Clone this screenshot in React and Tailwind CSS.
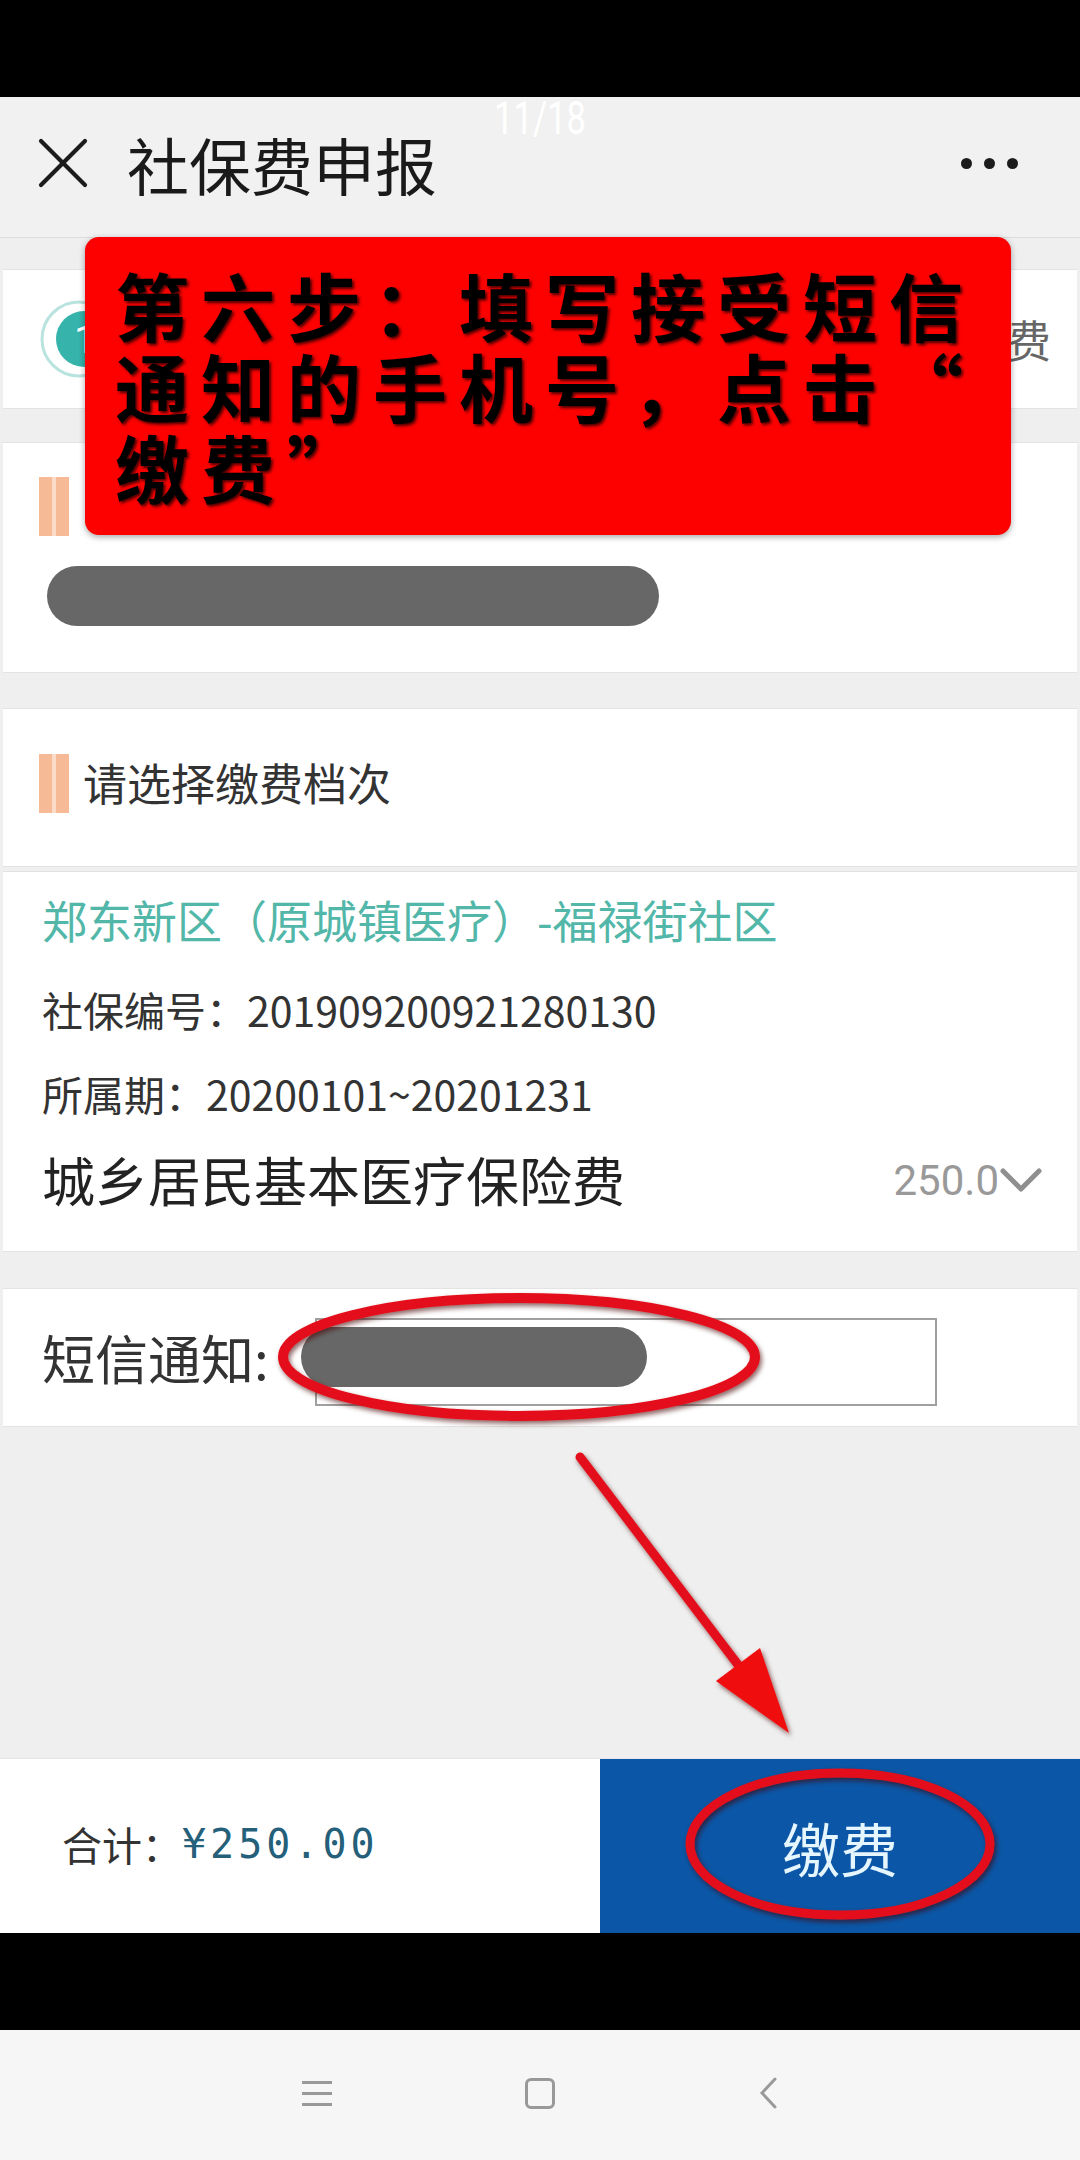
import { X } from 'lucide-react';

const cjk = { fontFamily: '"Noto Sans CJK SC", "Noto Sans", sans-serif' };

function OrangeBar({ className = '' }) {
  return (
    <div className={`flex h-[59px] w-[30px] shrink-0 ${className}`}>
      <div className="w-[13px] bg-[#f6bb96]" />
      <div className="w-[4px] bg-[#fbdcc8]" />
      <div className="w-[13px] bg-[#f6bb96]" />
    </div>
  );
}

function Card({ className = '', children }) {
  return (
    <div className={`mx-[3px] bg-white border-y border-[#e3e3e3] ${className}`}>{children}</div>
  );
}

export default function App() {
  return (
    <div className="relative w-[1080px] h-[2160px] overflow-hidden flex flex-col bg-[#efefef]" style={cjk}>
      {/* status bar */}
      <div className="h-[97px] bg-black shrink-0" />

      {/* header */}
      <div className="relative h-[141px] shrink-0 bg-[#f1f1f1] border-b border-[#dcdcdc] flex items-center pl-[19px] pr-[62px]">
        <span className="absolute left-1/2 top-[-2px] -translate-x-1/2 scale-x-75 text-[46px] leading-[46px] text-white" style={{ fontFamily: 'Roboto, sans-serif' }}>
          11/18
        </span>
        <X className="w-[88px] h-[88px] text-[#1c1c1c] mt-[-8px]" strokeWidth={1.15} />
        <h1 className="ml-[20px] text-[62px] leading-none text-[#1a1a1a] mt-[-6px]">社保费申报</h1>
        <div className="ml-auto flex gap-[12px] mt-[-8px]">
          <span className="w-[11px] h-[11px] rounded-full bg-[#1c1c1c]" />
          <span className="w-[11px] h-[11px] rounded-full bg-[#1c1c1c]" />
          <span className="w-[11px] h-[11px] rounded-full bg-[#1c1c1c]" />
        </div>
      </div>

      {/* content */}
      <div className="flex-1 flex flex-col pt-[31px]">
        {/* step indicator */}
        <Card className="h-[140px] flex items-center pl-[36px] pr-[26px]">
          <svg width="80" height="80" viewBox="0 0 80 80">
            <circle cx="40" cy="40" r="37" fill="none" stroke="#b9e3df" strokeWidth="3" />
            <circle cx="45" cy="40" r="28" fill="#36b3aa" />
            <text x="46" y="54" fontSize="38" fill="#fff" textAnchor="middle" fontFamily="Roboto, sans-serif">1</text>
          </svg>
          <span className="ml-auto text-[44px] text-[#666]">费</span>
        </Card>

        {/* payer */}
        <Card className="h-[231px] mt-[33px] pt-[34px] pl-[36px]">
          <OrangeBar />
          <div className="mt-[30px] ml-[8px] w-[612px] h-[60px] rounded-full bg-[#676767]" />
        </Card>

        {/* level header */}
        <Card className="h-[159px] mt-[35px] flex items-center pl-[36px]">
          <OrangeBar className="mt-[-8px]" />
          <span className="ml-[14px] text-[44px] leading-none text-[#333] mt-[-12px]">请选择缴费档次</span>
        </Card>

        {/* detail */}
        <Card className="h-[381px] mt-[4px] px-[39px] flex flex-col">
          <div className="h-[96px] flex items-center text-[45px] text-[#52b7a9] whitespace-nowrap">
            郑东新区（原城镇医疗）-福禄街社区
          </div>
          <div className="h-[84px] flex items-center text-[41px] text-[#333]">社保编号：201909200921280130</div>
          <div className="h-[84px] flex items-center text-[41px] text-[#333]">所属期：20200101~20201231</div>
          <div className="h-[88px] flex items-center">
            <span className="text-[53px] text-[#222]">城乡居民基本医疗保险费</span>
            <span className="ml-auto text-[42px] text-[#999]" style={{ fontFamily: 'Roboto, sans-serif' }}>250.0</span>
            <svg width="44" height="30" viewBox="0 0 44 30" className="mr-[-5px]">
              <path d="M4 6 L22 24 L40 6" fill="none" stroke="#8f8f8f" strokeWidth="5" strokeLinecap="round" strokeLinejoin="round" />
            </svg>
          </div>
        </Card>

        {/* sms */}
        <Card className="h-[139px] mt-[36px] flex items-center pl-[39px]">
          <span className="text-[53px] text-[#333]">短信通知:</span>
          <div className="relative ml-[46px] w-[622px] h-[88px] border-2 border-[#a0a0a0] mt-[8px]">
            <div className="absolute left-[-16px] top-[7px] w-[346px] h-[60px] rounded-[30px] bg-[#676767]" />
          </div>
        </Card>
      </div>

      {/* bottom bar */}
      <div className="h-[175px] shrink-0 flex border-t border-[#e6e6e6]">
        <div className="w-[600px] bg-white flex items-center pl-[62px] pb-[4px]">
          <span className="text-[40px] text-[#333]">合计：</span>
          <span className="text-[40px] tracking-[4px] text-[#24607a]" style={{ fontFamily: '"DejaVu Sans Mono", monospace' }}>¥250.00</span>
        </div>
        <div className="flex-1 bg-[#0b56a6] flex items-center justify-center">
          <span className="text-[58px] text-[#e6f6ff] mt-[2px]">缴费</span>
        </div>
      </div>

      <div className="h-[97px] shrink-0 bg-black" />

      {/* nav bar */}
      <div className="h-[130px] shrink-0 bg-[#f6f6f6] flex items-center pl-[302px] pb-[4px]">
        <div className="flex flex-col gap-[8px] w-[30px]">
          <span className="h-[3px] bg-[#999]" />
          <span className="h-[3px] bg-[#999]" />
          <span className="h-[3px] bg-[#999]" />
        </div>
        <div className="ml-[193px] w-[30px] h-[31px] rounded-[6px] border-[3px] border-[#999]" />
        <svg width="20" height="32" viewBox="0 0 20 32" className="ml-[203px]">
          <path d="M17 2 L4 16 L17 30" fill="none" stroke="#999" strokeWidth="3" strokeLinecap="round" />
        </svg>
      </div>

      {/* tutorial callout */}
      <div className="absolute left-[85px] top-[237px] w-[926px] h-[298px] rounded-[14px] bg-[#fd0000] shadow-[0_2px_6px_rgba(0,0,0,0.35)] pl-[30px] pt-[26px]">
        <p className="text-[74px] leading-[81px] font-bold tracking-[12px] text-black whitespace-nowrap [text-shadow:2px_2px_3px_#4a0000]">
          第六步：填写接受短信
          <br />
          通知的手机号，点击“
          <br />
          缴费”
        </p>
      </div>

      {/* annotations */}
      <svg className="absolute inset-0 pointer-events-none" width="1080" height="2160" viewBox="0 0 1080 2160">
        <defs>
          <filter id="sh" x="-20%" y="-20%" width="140%" height="140%">
            <feDropShadow dx="2" dy="3" stdDeviation="2.5" floodColor="#400" floodOpacity="0.6" />
          </filter>
        </defs>
        <ellipse cx="519" cy="1357" rx="236" ry="59" fill="none" stroke="#e3111a" strokeWidth="10" filter="url(#sh)" />
        <ellipse cx="840" cy="1844" rx="150" ry="71" fill="none" stroke="#e3111a" strokeWidth="9" filter="url(#sh)" />
        <g filter="url(#sh)">
          <line x1="580" y1="1457" x2="742" y2="1670" stroke="#e3111a" strokeWidth="9" strokeLinecap="round" />
          <polygon points="789,1733 716,1681 760,1648" fill="#f01010" />
        </g>
      </svg>
    </div>
  );
}
